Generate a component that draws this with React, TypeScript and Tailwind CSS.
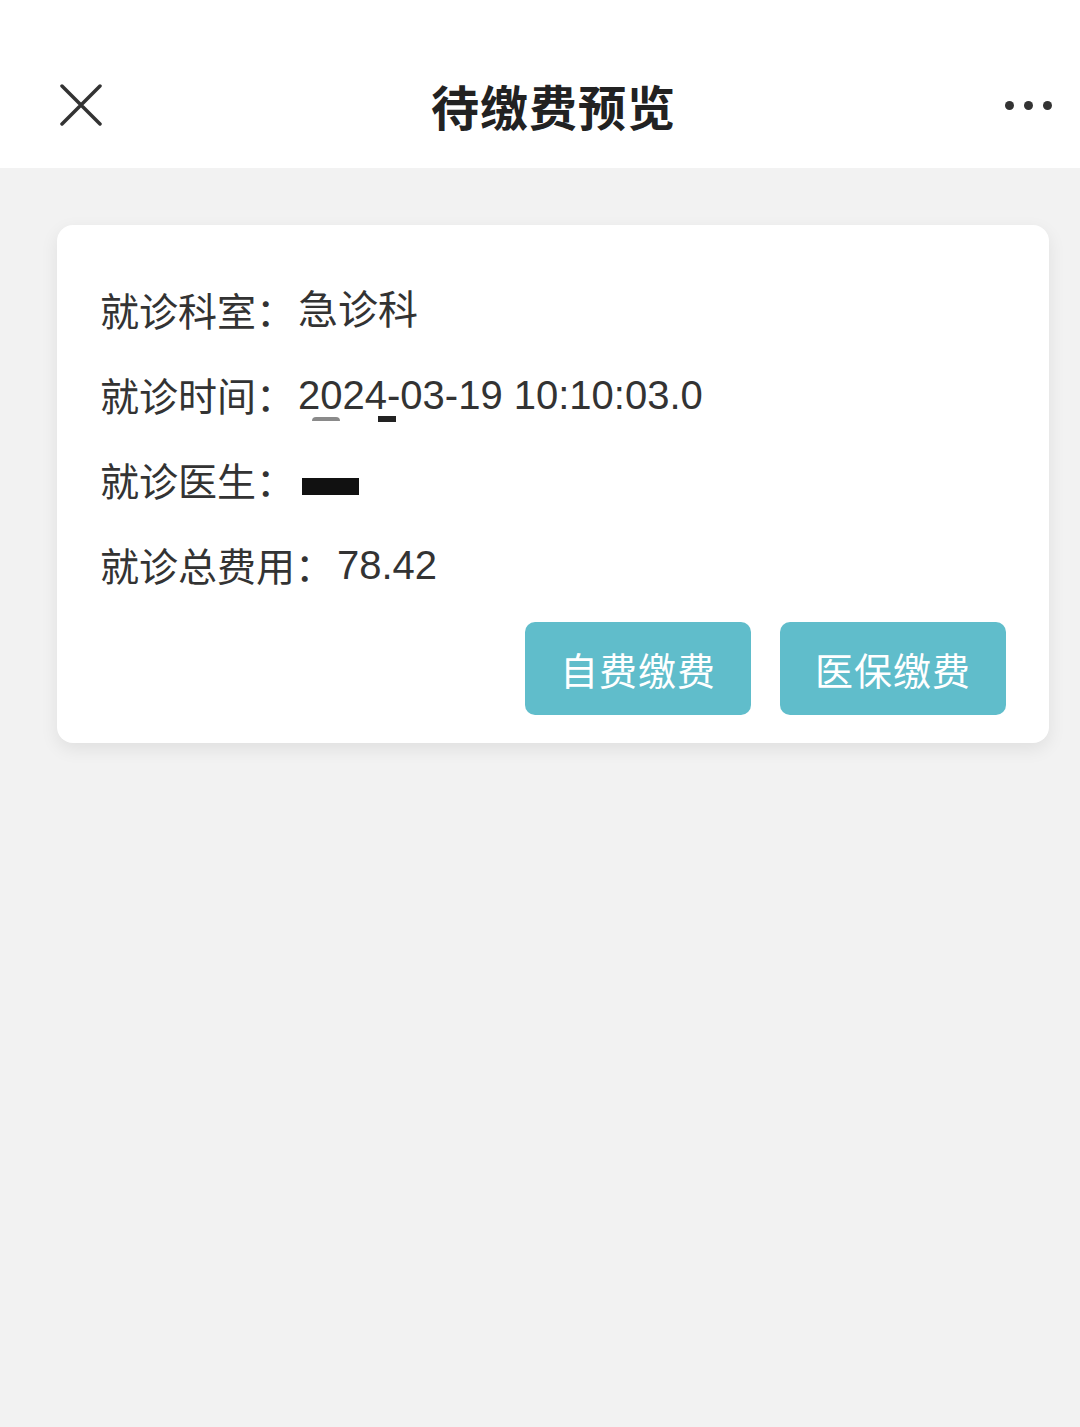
import React from "react";

const font = { fontFamily: '"Noto Sans CJK SC", "Noto Sans", sans-serif' };

const rows: { label: string; value: React.ReactNode }[] = [
  { label: "就诊科室：", value: "急诊科" },
  {
    label: "就诊时间：",
    value: (
      <span className="relative">
        2024-03-19 10:10:03.0
        <span className="absolute left-[14px] top-[44px] h-[4px] w-[28px] rounded-t-full bg-[#8a8a8a]" />
        <span className="absolute left-[80px] top-[43px] h-[6px] w-[18px] bg-[#222]" />
      </span>
    ),
  },
  {
    label: "就诊医生：",
    value: (
      <span className="relative inline-block h-[20px] w-[70px] align-middle">
        <span className="absolute left-[4px] top-[5px] h-[17px] w-[57px] bg-[#111]" />
      </span>
    ),
  },
  { label: "就诊总费用：", value: "78.42" },
];

export default function App() {
  return (
    <div className="min-h-[1427px] w-[1080px] bg-[#f2f2f2]" style={font}>
      <header className="flex h-[168px] items-center justify-between bg-white px-[60px] pr-[28px] pt-[42px]">
        <svg width="42" height="42" viewBox="0 0 42 42">
          <path d="M2 2 L40 40 M40 2 L2 40" stroke="#333" strokeWidth="3.5" strokeLinecap="round" />
        </svg>
        <h1 className="text-[48px] font-bold tracking-[1px] text-[#222]">待缴费预览</h1>
        <div className="flex gap-[10px]">
          <span className="h-[9px] w-[9px] rounded-full bg-[#333]" />
          <span className="h-[9px] w-[9px] rounded-full bg-[#333]" />
          <span className="h-[9px] w-[9px] rounded-full bg-[#333]" />
        </div>
      </header>

      <div className="px-[57px] pt-[57px] pr-[31px]">
        <div className="rounded-[16px] bg-white px-[43px] pt-[42px] pb-[28px] shadow-[0_6px_18px_rgba(0,0,0,0.08)]">
          {rows.map((r) => (
            <div key={r.label} className="flex h-[85px] items-center text-[39px] text-[#333]">
              <span>{r.label}</span>
              <span
                className="ml-[3px] text-[40px]"
                style={{ fontFamily: '"Liberation Sans", "Noto Sans CJK SC", sans-serif' }}
              >
                {r.value}
              </span>
            </div>
          ))}
          <div className="mt-[15px] flex justify-end gap-[29px]">
            <button className="h-[93px] w-[226px] rounded-[10px] bg-[#60bdcb] text-[38px] tracking-[1px] text-white">
              自费缴费
            </button>
            <button className="h-[93px] w-[226px] rounded-[10px] bg-[#60bdcb] text-[38px] tracking-[1px] text-white">
              医保缴费
            </button>
          </div>
        </div>
      </div>
    </div>
  );
}
